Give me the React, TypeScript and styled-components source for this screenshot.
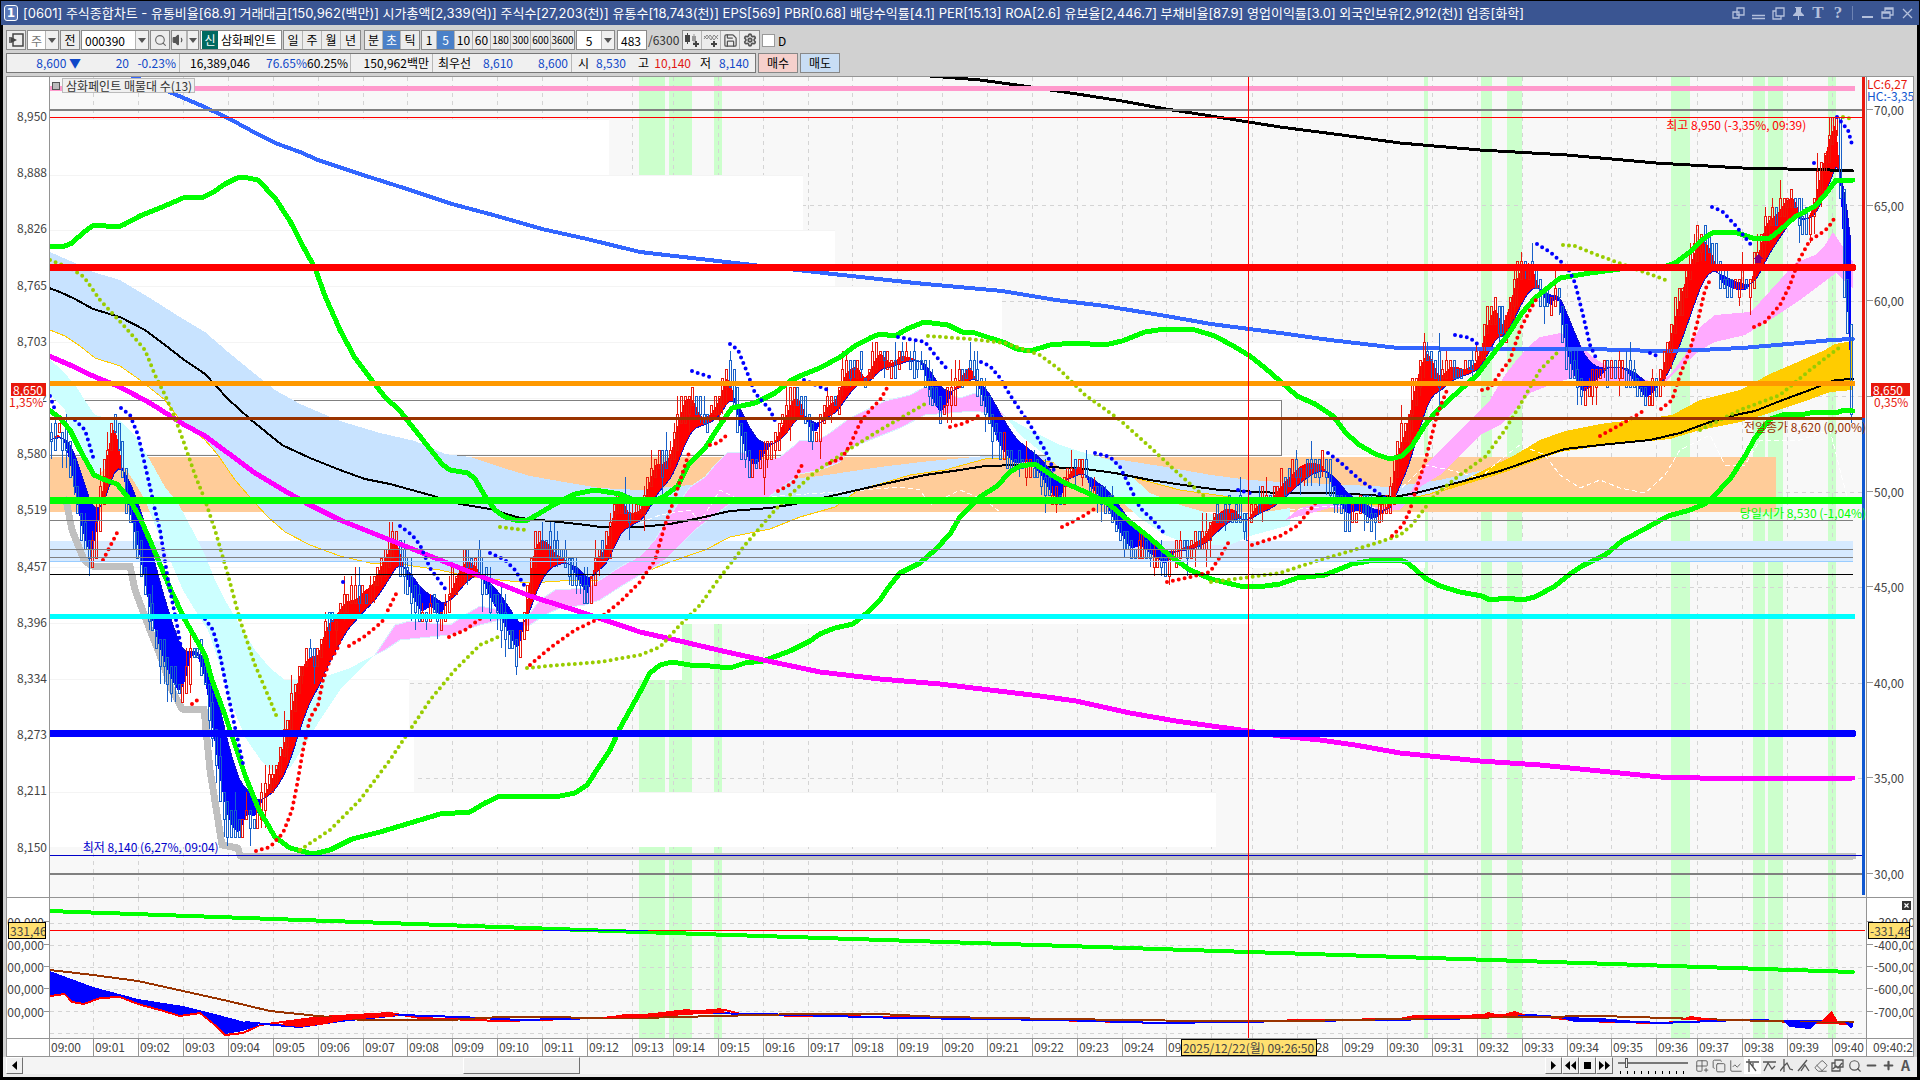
import React from "react";
import styled, { createGlobalStyle, css } from "styled-components";
import {
  Search, Volume1, Save, Settings, Minus, Plus, Copy, X, Grid2x2Plus, ChartLine, Eraser,
} from "lucide-react";

const FONT = '"Noto Sans CJK KR", sans-serif';

const Global = createGlobalStyle`
  * { box-sizing: border-box; }
  html, body, #root { height: 100%; }
  body { margin: 0; background: #000; font-family: ${FONT}; font-size: 12px; color: #000; overflow: hidden; }
  button, input, select { font: inherit; color: inherit; margin: 0; padding: 0; border-radius: 0; }
`;

/* ---------- shell ---------- */

const Shell = styled.div`
  height: 100vh;
  min-height: 600px;
  display: flex;
  flex-direction: column;
  border: solid #000;
  border-width: 1px 3px 3px;
  background: #d1d1d1;
`;
const TitleBar = styled.header`
  flex: none;
  height: 24px;
  margin: 0 -2px;
  padding: 0 2px 0 3px;
  display: flex;
  align-items: center;
  background: #3a5592;
  color: #fff;
`;
const TitleBadge = styled.span`
  width: 14px;
  height: 16px;
  margin-right: 5px;
  border: 1px solid #fff;
  border-radius: 3px;
  background: #5a78b8;
  font: bold 12px/14px "DejaVu Sans", sans-serif;
  text-align: center;
`;
const TitleText = styled.h1`
  flex: 1;
  margin: 0;
  font: 400 13px/24px Inter, "Noto Sans CJK KR", sans-serif;
  white-space: pre;
  overflow: hidden;
`;
const WindowButton = styled.button`
  width: 20px;
  height: 20px;
  display: grid;
  place-items: center;
  border: 0;
  background: none;
  color: #b4c0dc;
  font: bold 17px/18px "Liberation Serif", serif;
`;
const TitleDivider = styled.i`
  width: 1px;
  height: 14px;
  margin: 0 4px;
  background: #6d83b3;
`;

/* ---------- tool bars ---------- */

const ToolArea = styled.div`
  flex: none;
  padding: 5px 3px 3px;
  display: flex;
  flex-direction: column;
  gap: 3px;
`;
const ToolRow = styled.div`
  height: 20px;
  display: flex;
  white-space: nowrap;
`;
const Group = styled.div<{ $gap?: number }>`
  display: flex;
  flex: none;
  margin-right: ${(p) => p.$gap ?? 1}px;
  border: 1px solid #8a8a8a;
  background: #f0f0f0;
`;
const ToolButton = styled.button<{ $w?: number; $on?: boolean; $small?: boolean }>`
  width: ${(p) => p.$w ?? 19}px;
  height: 18px;
  display: grid;
  place-items: center;
  font-size: ${(p) => (p.$small ? 10 : 12)}px;
  line-height: 18px;
  border: 0;
  border-right: 1px solid #b4b4b4;
  background: ${(p) => (p.$on ? "#4a80c8" : "#ececec")};
  color: ${(p) => (p.$on ? "#fff" : "#000")};
  &:last-child { border-right: 0; }
`;
const Field = styled.input<{ $w: number }>`
  width: ${(p) => p.$w}px;
  height: 18px;
  padding: 0 3px;
  border: 0;
  background: #fff;
`;
const Picker = styled.select<{ $w: number; $dim?: boolean }>`
  width: ${(p) => p.$w}px;
  height: 18px;
  padding: 0 2px;
  border: 0;
  appearance: none;
  background: #fff;
  text-align: center;
  color: ${(p) => (p.$dim ? "#777" : "#000")};
`;
const Arrow = styled.i<{ $w?: number }>`
  width: ${(p) => p.$w ?? 13}px;
  display: grid;
  place-items: center;
  border-left: 1px solid #b4b4b4;
  &::after {
    content: "";
    border: solid transparent;
    border-width: 5px 4px 0;
    border-top-color: #555;
  }
`;
const StockName = styled.div`
  width: 82px;
  flex: none;
  display: flex;
  overflow: hidden;
  padding-left: 1px;
  margin-right: 1px;
  line-height: 18px;
  border: 1px solid #8a8a8a;
  background: #fff;
`;
const NewTag = styled.b`
  width: 16px;
  margin-right: 3px;
  font-weight: 400;
  text-align: center;
  background: #006a60;
  color: #fff;
`;
const Total = styled.span`
  width: 34px;
  line-height: 20px;
  color: #333;
`;
const CheckLabel = styled.label`
  display: flex;
  align-items: center;
  gap: 3px;
  input {
    appearance: none;
    width: 13px;
    height: 13px;
    border: 1px solid #999;
    background: #fff;
  }
`;

const QuoteBox = styled.div`
  width: 750px;
  display: flex;
  margin-right: 2px;
  border: 1px solid #777;
  background: #f0f0f0;
`;
const Quote = styled.span<{ $w: number; $c?: string; $line?: boolean }>`
  width: ${(p) => p.$w}px;
  height: 18px;
  line-height: 18px;
  text-align: right;
  color: ${(p) => p.$c ?? "#000"};
  ${(p) => p.$line && css`padding-right: 3px; border-right: 1px solid #b8b8b8;`}
`;
const TradeButton = styled.button<{ $bg: string }>`
  width: 40px;
  height: 20px;
  margin-right: 2px;
  line-height: 18px;
  border: 1px solid #888;
  background: ${(p) => p.$bg};
`;

/* ---------- chart frame ---------- */

const ChartFrame = styled.main`
  flex: 1;
  min-height: 0;
  margin: 0 3px;
  display: grid;
  grid-template-columns: 43px minmax(0, 1fr) 47px;
  grid-template-rows: minmax(0, 821fr) minmax(0, 141fr) 17px;
  border: 1px solid #949494;
  background: #fff;
  color: #444;
`;
const Cell = styled.div<{ $side?: "left" | "right"; $last?: boolean }>`
  position: relative;
  overflow: hidden;
  border: 0 solid #949494;
  border-bottom-width: ${(p) => (p.$last ? 0 : 1)}px;
  border-right-width: ${(p) => (p.$side === "left" ? 1 : 0)}px;
  border-left-width: ${(p) => (p.$side === "right" ? 1 : 0)}px;
`;
const Plot = styled.svg`
  display: block;
  width: 100%;
  height: 100%;
  background: #f8f8f8;
`;
const Scale = styled.div<{ $top: number; $bottom: number }>`
  height: 100%;
  padding-right: 2px;
  display: flex;
  flex-direction: column;
  &::before { content: ""; height: calc(${(p) => p.$top}% - 8px); }
  &::after { content: ""; height: calc(${(p) => p.$bottom}% - 8px); }
`;
const ScaleBody = styled.div`
  flex: 1;
  display: flex;
  flex-direction: column;
  justify-content: space-between;
`;
const Tick = styled.span<{ $right?: boolean; $mark?: boolean }>`
  display: flex;
  align-items: center;
  height: 16px;
  white-space: nowrap;
  justify-content: ${(p) => (p.$right ? "flex-start" : "flex-end")};
  ${(p) => p.$mark && p.$right && css`
    &::before { content: ""; flex: none; width: 6px; height: 1px; margin-right: 1px; background: #949494; }
  `}
  ${(p) => p.$mark && !p.$right && css`
    margin-right: -2px;
    &::after { content: ""; flex: none; width: 5px; height: 1px; background: #949494; }
  `}
`;
const Badge = styled.div<{ $top: number; $bg: string; $w: number; $line?: boolean }>`
  position: absolute;
  top: ${(p) => p.$top}%;
  right: 3px;
  width: ${(p) => p.$w}px;
  overflow: hidden;
  line-height: 13px;
  padding: 0 2px;
  white-space: nowrap;
  background: ${(p) => p.$bg};
  color: #fff;
  ${(p) => p.$line && css`
    line-height: 15px;
    padding: 0 1px;
    border: 1px solid #000;
    color: #444;
  `}
`;
const BadgeNote = styled.div<{ $top: number; $right?: boolean }>`
  position: absolute;
  top: ${(p) => p.$top}%;
  left: ${(p) => (p.$right ? 7 : 2)}px;
  line-height: 12px;
  background: #fff;
  color: #e8180c;
`;
const Limits = styled.div`
  position: absolute;
  top: 1px;
  left: 0;
  line-height: 12px;
  white-space: nowrap;
  background: #fff;
  color: #e8180c;
  span { display: block; color: #1058d0; }
`;
const Note = styled.span<{ $x: number; $y: number; $c: string; $end?: boolean }>`
  position: absolute;
  top: ${(p) => p.$y}%;
  ${(p) => (p.$end ? "right" : "left")}: ${(p) => p.$x}%;
  line-height: 14px;
  white-space: pre;
  color: ${(p) => p.$c};
`;
const Legend = styled.div`
  position: absolute;
  top: 1px;
  left: 2px;
  display: flex;
  align-items: center;
  gap: 2px;
  line-height: 13px;
  &::before { content: ""; width: 6px; height: 6px; border: 1px solid #555; background: #bbb; }
  span { padding: 0 2px 0 3px; border: 1px solid #bbb; background: #f0f0f0; color: #333; white-space: nowrap; }
`;
const CloseMark = styled.button`
  position: absolute;
  top: 3px;
  right: 2px;
  width: 9px;
  height: 9px;
  border: 0;
  display: grid;
  place-items: center;
  background: #333;
  color: #fff;
`;
const TimeAxis = styled.div<{ $cols: string }>`
  height: 100%;
  display: grid;
  grid-template-columns: ${(p) => p.$cols};
  line-height: 16px;
  span { border-left: 1px solid #949494; padding-left: 1px; white-space: nowrap; overflow: hidden; }
  span:first-child { border-left: 0; }
`;
const TimeBadge = styled.div`
  position: absolute;
  left: 66%;
  top: 0;
  transform: translateX(-50%);
  width: 136px;
  line-height: 15px;
  text-align: center;
  white-space: nowrap;
  border: 1px solid #000;
  background: #ffe070;
  color: #444;
`;
const LastTime = styled.div`
  padding-left: 6px;
  line-height: 16px;
  white-space: nowrap;
`;

/* ---------- bottom bar ---------- */

const BottomBar = styled.footer`
  flex: none;
  height: 20px;
  padding: 0 3px 3px;
  display: flex;
  background: #ececec;
`;
const ScrollTrack = styled.div`
  flex: 1;
  display: grid;
  grid-template-columns: 17px 440fr 117fr 964fr;
  background: #f4f4f4;
`;
const raised = css`
  border: 1px solid;
  border-color: #fff #707070 #707070 #fff;
  background: #f0f0f0;
`;
const RaisedButton = styled.button`
  width: 17px;
  height: 17px;
  display: grid;
  place-items: center;
  ${raised}
`;
const ScrollThumb = styled.div`
  grid-column: 3;
  ${raised}
`;
const Zoomer = styled.input`
  width: 70px;
  height: 17px;
  margin: 0 5px;
  appearance: none;
  background:
    repeating-linear-gradient(90deg, #000 0 1px, transparent 1px 7px) 2px 14px / 100% 3px no-repeat,
    linear-gradient(#777, #777) 0 5px / 100% 2px no-repeat;
  &::-webkit-slider-thumb { appearance: none; width: 3px; height: 10px; margin-top: -5px; background: #f0f0f0; border: 1px solid #555; }
`;
const MiniButton = styled.button<{ $on?: boolean }>`
  width: 17px;
  height: 17px;
  display: grid;
  place-items: center;
  border: 0;
  background: ${(p) => (p.$on ? "#fff" : "none")};
  color: #555;
  b { font-size: 14px; line-height: 17px; }
`;

/* ---------- series ---------- */

type Pt = [number, number];
const line = (s: string): Pt[] => s.split(" ").map((p) => p.split(",").map(Number) as Pt);

const TICKS = [49, 93, 138, 183, 228, 273, 318, 363, 407, 452, 497, 542, 587, 632, 673, 718, 763, 808, 852, 897, 942, 987, 1032, 1077, 1122, 1166, 1211, 1252, 1297, 1342, 1387, 1432, 1477, 1522, 1567, 1611, 1656, 1697, 1742, 1787, 1832];
const SIGNALS = [[639, 26], [669, 23], [714, 8], [1424, 4], [1481, 11], [1507, 15], [1671, 19], [1753, 12], [1768, 15], [1828, 8]];
const VOLUME_ROWS = [[120, 609], [176, 803], [231, 835], [287, 1002], [343, 1440], [399, 1281], [455, 1425], [511, 1425], [568, 1252], [624, 682], [680, 409], [735, 414], [793, 1216], [847, 50]];

const LONG_BLUE = "130,75 172,93 200,105 228,118 250,130 275,143 300,152 318,160 363,175 407,189 452,204 497,216 542,229 587,239 640,252 735,263 833,274 915,283 1002,291 1056,300 1105,306 1166,316 1211,324 1280,333 1330,340 1398,348 1480,349 1590,349 1656,351 1700,350 1742,348 1800,343 1832,340 1853,339";
const LONG_BLACK = "930,76 980,80 1024,86 1077,94 1122,101 1166,109 1211,116 1280,127 1342,135 1400,143 1480,150 1567,155 1656,163 1742,168 1787,169 1830,170 1853,171";
const BAND_UP = "49,247 65,246 72,243 84,232 94,225 118,227 125,224 140,216 160,208 183,198 204,197 215,191 225,184 237,178 243,177 258,180 275,198 290,221 305,250 315,268 325,296 340,330 355,358 370,378 385,397 400,411 415,430 430,449 442,464 450,470 468,473 475,479 485,496 495,510 505,517 515,520 528,520 540,513 555,504 575,494 595,490 620,494 640,503 650,503 663,497 678,486 688,465 705,448 720,425 732,408 755,403 775,393 790,381 800,376 820,368 840,357 855,346 872,337 880,334 895,336 907,329 924,322 948,325 962,332 975,333 990,338 1003,342 1017,349 1030,351 1050,345 1075,343 1105,345 1122,341 1145,332 1165,329 1195,330 1215,336 1235,347 1250,356 1265,368 1280,381 1297,396 1315,404 1333,416 1345,432 1358,444 1375,454 1390,459 1402,456 1412,446 1425,425 1435,413 1450,399 1477,375 1490,358 1507,336 1522,313 1535,298 1550,286 1560,278 1590,273 1620,269 1660,268 1675,263 1690,252 1702,240 1712,233 1735,232 1755,239 1770,238 1780,230 1795,217 1815,206 1825,195 1836,180 1853,180";
const BAND_LOW = "49,410 60,418 70,430 80,450 94,475 105,480 117,484 130,500 141,520 155,552 170,588 185,620 205,655 212,680 225,715 235,745 245,775 258,808 275,837 290,848 313,854 330,850 352,839 380,832 410,823 440,814 470,812 485,803 500,796 520,796 540,797 560,796 575,793 587,785 600,765 610,750 620,728 640,692 650,673 660,665 672,662 690,665 710,666 730,668 745,663 763,661 790,651 810,641 820,634 835,628 853,624 868,612 880,600 888,588 900,573 920,563 935,550 950,534 960,517 972,505 980,497 997,486 1010,472 1020,466 1035,464 1050,474 1065,483 1090,494 1110,505 1130,522 1150,538 1170,556 1190,570 1211,579 1240,586 1265,586 1280,584 1297,578 1325,575 1352,564 1375,560 1400,560 1408,563 1425,578 1440,586 1460,592 1482,596 1490,600 1507,598 1522,600 1535,597 1555,586 1570,574 1582,566 1605,555 1622,541 1650,526 1668,516 1690,510 1705,504 1713,497 1730,479 1745,456 1755,438 1770,419 1785,414 1800,415 1815,412 1835,413 1845,410 1853,411";
const MAGENTA = "49,356 70,365 93,376 120,387 150,403 183,424 205,436 228,453 255,473 285,491 306,503 340,520 390,540 430,556 480,576 530,596 587,614 640,632 680,641 718,650 763,660 820,672 880,679 940,684 990,690 1040,696 1076,701 1130,713 1176,721 1248,731 1280,736 1320,740 1355,745 1400,753 1450,758 1480,761 1540,765 1600,771 1660,777 1700,778 1780,778 1810,779 1853,778";
const MID_BLACK = "49,288 60,292 75,299 93,309 120,317 145,330 165,345 183,359 205,374 228,399 250,419 282,445 310,458 340,470 365,479 390,484 430,495 460,504 490,509 520,518 550,521 587,525 600,527 640,527 670,524 700,518 730,511 770,508 795,504 840,494 875,486 925,475 960,470 985,466 1020,465 1050,467 1085,469 1115,473 1150,480 1190,486 1220,490 1280,493 1330,493 1370,495 1395,497 1420,492 1460,482 1500,471 1540,457 1565,449 1600,445 1650,440 1680,433 1710,422 1740,414 1755,411 1780,401 1810,390 1835,380 1853,379";
const CLOUD_TOP = "50,252 75,263 93,272 120,280 150,298 183,319 205,332 228,352 255,374 275,390 300,404 340,421 380,433 415,441 445,454 470,457 500,467 530,476 570,483 600,488 640,490 690,485 730,482 780,480 820,476 880,467 930,461 985,456 1020,455 1060,457 1122,460 1166,467 1211,475 1250,480 1280,482 1330,484 1390,487 1440,480 1470,473 1484,470";
const CLOUD_LOW = "50,330 65,336 80,346 95,358 120,366 140,380 165,400 180,420 205,440 218,455 235,480 255,503 268,517 285,532 310,545 340,556 370,563 400,564 440,570 470,577 500,580 530,583 560,581 600,580 640,574 670,562 705,550 730,537 770,529 800,517 835,507 860,489 880,484 910,475 945,470 985,459 1010,458 1040,460 1060,464 1090,467 1120,474 1150,482 1180,490 1230,497 1300,502 1380,505 1430,494 1484,473";
const GOLD = "1440,492 1484,470 1515,455 1540,440 1565,431 1600,424 1650,418 1672,415 1700,400 1740,390 1770,374 1800,361 1825,350 1835,344 1853,341 1853,390 1830,392 1800,403 1770,413 1740,422 1700,430 1670,439 1600,446 1560,452 1500,474";
const CYAN_1 = "50,360 62,370 75,385 90,408 95,415 120,421 135,435 150,460 165,487 178,503 195,535 205,555 215,580 225,600 240,625 255,650 270,668 285,680 310,681 330,675 350,668 365,660 375,655 365,664 340,690 320,720 305,745 290,768 275,773 262,762 245,737 230,700 220,665 208,630 195,610 183,590 170,560 155,525 145,500 135,483 125,468 115,462 103,470 95,478 85,460 75,440 65,410 50,395";
const PINK_1 = "375,655 385,640 395,625 410,621 450,625 465,615 480,606 500,610 515,625 525,620 540,600 555,590 587,588 600,580 620,567 640,556 655,540 670,515 690,487 705,477 715,465 728,452 745,453 765,460 780,457 795,445 800,440 815,442 830,433 850,418 885,401 910,395 925,387 940,390 960,398 975,393 990,402 1005,416 975,411 950,413 925,415 900,428 870,440 850,448 840,462 820,470 800,474 785,485 765,500 750,498 735,500 715,515 695,530 680,545 665,560 650,570 640,575 620,587 600,600 585,605 560,608 545,615 530,625 520,626 500,620 480,625 450,635 420,638 400,640 385,650";
const CYAN_2 = "1005,416 1030,430 1060,445 1075,450 1110,460 1130,475 1150,493 1180,505 1215,515 1260,513 1290,508 1290,525 1250,536 1230,545 1190,545 1165,535 1140,518 1120,500 1100,485 1080,475 1060,468 1045,455 1020,435";
const PINK_2 = "1285,520 1300,508 1320,503 1350,502 1380,508 1405,500 1412,490 1425,465 1440,450 1455,435 1475,415 1490,400 1505,375 1515,362 1530,345 1540,337 1560,333 1575,340 1590,355 1605,365 1625,370 1640,378 1655,383 1670,375 1685,355 1700,327 1715,315 1750,312 1760,302 1780,280 1795,263 1815,255 1825,245 1833,232 1853,262 1853,288 1836,273 1820,285 1800,300 1770,320 1745,335 1715,342 1700,350 1680,368 1665,382 1650,385 1630,383 1600,382 1575,377 1555,383 1530,393 1515,410 1500,425 1480,435 1460,455 1440,475 1420,487 1400,510 1370,512 1330,508 1300,516";
const FLOOR = "66,500 72,530 84,560 92,566 130,566 135,590 150,630 160,655 172,690 182,709 204,709 210,770 222,845 238,848 240,856 1853,856";
const GHOSTS = [
  "640,523 660,515 690,510 700,522 720,490 740,500 790,495 840,492 900,487 920,490 930,505 960,490 985,500 1000,512",
  "1290,510 1330,506 1380,508 1410,480 1425,465 1450,470 1480,478 1500,460 1520,445 1545,455 1560,475 1580,488 1600,480 1620,488 1645,493 1665,475 1680,450 1710,435 1725,465 1745,465 1760,440 1800,440 1830,430 1840,470 1848,500",
];

const PRICE = line("50,440 58,433 65,445 72,480 80,530 88,555 93,550 100,500 105,460 110,425 115,425 120,460 127,510 135,540 143,580 150,620 160,655 170,680 178,695 185,680 190,650 197,655 205,685 212,735 220,790 228,825 238,835 246,812 255,818 265,790 275,770 285,735 292,700 300,665 310,655 318,655 325,625 335,615 345,600 355,600 363,590 372,585 380,565 388,550 395,535 403,570 410,595 420,615 430,605 440,618 450,590 460,565 468,560 478,570 487,595 498,615 508,635 518,655 525,610 533,540 545,540 555,555 565,560 577,580 587,598 595,555 605,550 612,510 620,495 628,515 640,510 647,485 655,460 662,465 670,455 677,420 685,395 693,400 700,420 710,415 720,395 727,370 733,395 740,440 748,465 757,465 765,450 775,440 783,420 793,395 800,400 808,430 815,435 825,405 835,400 845,370 855,365 865,380 878,350 890,365 900,355 912,358 922,365 930,400 940,415 950,395 960,375 970,365 980,395 990,425 1000,450 1015,465 1025,460 1040,475 1050,495 1060,500 1068,470 1080,465 1090,490 1103,500 1110,515 1120,535 1130,550 1140,545 1150,555 1165,565 1175,550 1190,545 1205,535 1213,515 1225,508 1235,510 1245,525 1255,505 1270,500 1280,485 1290,475 1300,465 1310,462 1322,465 1332,490 1345,515 1358,510 1370,520 1380,515 1390,500 1395,450 1405,430 1412,395 1420,360 1428,350 1438,380 1450,365 1465,370 1477,360 1487,320 1495,305 1502,330 1512,290 1520,265 1530,262 1538,290 1550,310 1557,290 1565,355 1572,375 1582,395 1595,380 1610,365 1625,370 1635,385 1645,400 1658,385 1668,340 1678,300 1690,260 1700,235 1710,250 1720,285 1735,290 1748,290 1758,250 1765,220 1775,215 1785,200 1793,195 1802,225 1812,210 1820,170 1830,130 1836,120 1839,160 1842,280 1846,290 1849,390 1853,430");

const RED_DOTS = ["103,560 117,533", "192,704 200,698", "256,851 270,847 283,833 292,810 297,785 303,750 310,718 318,705 323,680 330,660 337,650 341,637", "349,646 365,636 382,622 392,602 398,590", "449,637 465,630 480,619", "530,665 550,648 575,630 600,618 620,602 640,582 655,560 665,525 675,497 685,465 690,450", "710,445 718,443 727,435", "778,491 793,483 802,465", "830,463 842,458 850,445 860,423 870,410 880,400 887,388", "950,427 965,423 978,416", "1062,527 1080,518 1096,508", "1167,582 1190,577 1210,572 1220,557 1230,540", "1252,545 1280,536 1297,526 1310,510 1318,500", "1392,536 1403,525 1410,510 1415,493 1425,462 1437,415 1447,390", "1482,390 1490,388 1500,373 1510,360 1520,330 1530,310 1537,298", "1600,436 1620,425 1645,410", "1661,409 1672,400 1680,375 1690,350 1698,320 1705,290 1710,280", "1754,327 1765,322 1780,305 1790,285 1798,262 1810,240 1820,234 1828,228 1834,219"];
const BLUE_DOTS = ["50,396 55,410", "75,420 85,430 94,460", "121,408 130,415 138,435 145,465 150,487 155,510 160,530 168,580 178,630 183,660", "205,619 213,630 220,655 225,680 233,718 243,764", "343,582 347,580", "400,526 412,535 420,545 430,568 446,590", "490,553 505,560 515,570 524,585", "692,371 710,377", "730,344 738,350 745,367 755,393 770,410 777,425", "804,380 818,386 828,390", "898,337 925,342 935,355 948,370", "981,362 990,366 1000,378 1010,395 1030,425 1045,450 1055,473", "1095,453 1110,457 1120,467 1130,487 1140,508 1153,520 1164,533", "1238,490 1250,493", "1328,453 1340,462 1360,480 1385,498", "1455,335 1470,338 1480,346", "1537,244 1550,252 1568,268 1575,283 1583,315 1590,345 1597,360", "1650,353 1660,357", "1712,207 1722,211 1735,225 1752,246", "1814,163 1815,163", "1837,117 1848,130 1853,148"];
const OLIVE_DOTS = ["50,260 70,268 84,277 100,300 125,327 145,350 155,375 165,395 175,418 183,440 195,475 205,500 215,530 228,575 240,620 255,665 270,700 278,720", "300,850 330,830 360,800 390,760 410,730 430,700 455,670 480,645 498,637", "500,527 525,530", "527,668 560,665 600,662 640,655 660,647 680,625 700,605 718,580 745,545 775,510 790,495 815,472 845,452 880,430 925,404", "928,336 970,339 1005,343 1040,355 1060,370 1085,395 1120,420 1150,447 1180,475 1205,497", "1211,582 1250,577 1280,573 1310,563 1340,554 1380,542 1400,535 1412,525 1425,508 1435,495 1460,475 1485,457 1505,430 1520,405 1540,370 1560,350", "1563,245 1575,246 1600,256 1630,267 1655,276 1668,281", "1700,430 1740,410 1780,395 1810,370 1840,347", "1843,117 1853,119"];

const valueAt = (pts: Pt[], x: number) => {
  const i = Math.max(1, pts.findIndex((p) => p[0] >= x));
  const [a, b] = [pts[i - 1], pts[i]];
  return a[1] + ((b[1] - a[1]) * (x - a[0])) / (b[0] - a[0]);
};

const BAR = 3.75;
const TICK_SIZE = 9;
const bars = Array.from({ length: 481 }, (_, i) => 51 + i * BAR);
const closes = bars.map((x) => valueAt(PRICE, Math.min(x, 1853)));
const average = (alpha: number) => {
  let v = closes[0];
  return closes.map((c) => (v += (c - v) * alpha));
};
const fast = average(0.7);
const slow = average(0.16);

const ribbon = (up: boolean) =>
  bars.slice(1).map((x, k) => {
    const i = k + 1;
    const isUp = fast[i] + fast[i - 1] < slow[i] + slow[i - 1];
    if (isUp !== up) return "";
    return `M${bars[i - 1]} ${fast[i - 1]}L${x} ${fast[i]}L${x} ${slow[i]}L${bars[i - 1]} ${slow[i - 1]}Z`;
  }).join("");

let seed = 17;
const rand = () => (seed = (seed * 16807) % 2147483647) / 2147483647;
const snap = (v: number) => Math.round((v - 855) / TICK_SIZE) * TICK_SIZE + 855;
const clamp = (v: number) => Math.min(855, Math.max(117, v));
const candles = { up: "", down: "" };
bars.forEach((x, i) => {
  const prev = closes[Math.max(0, i - 1)];
  const shift = (rand() - 0.5) * 10;
  const top = snap(Math.min(prev, closes[i]) + shift - TICK_SIZE * rand() * 1.3);
  const bottom = Math.max(snap(Math.max(prev, closes[i]) + shift + TICK_SIZE * rand() * 1.3), top + TICK_SIZE);
  const high = rand() > 0.7 ? top - TICK_SIZE * Math.ceil(rand() * 2) : top;
  const low = rand() > 0.7 ? bottom + TICK_SIZE * Math.ceil(rand() * 2) : bottom;
  const cx = Math.round(x) + 0.5;
  const d = `M${cx} ${clamp(high)}V${clamp(top)}M${cx} ${clamp(bottom)}V${clamp(low)}M${cx - 1} ${clamp(top)}h2V${clamp(bottom)}h-2Z`;
  if (closes[i] - prev + (rand() - 0.5) * 14 < 0) candles.up += d;
  else candles.down += d;
});

const path = (values: number[]) => bars.map((x, i) => `${x},${values[i].toFixed(1)}`).join(" ");
const reversed = (s: string) => s.split(" ").reverse().join(" ");

const Curve = ({ d, c, w }: { d: string; c: string; w: number }) => (
  <polyline points={d} fill="none" stroke={c} strokeWidth={w} strokeLinejoin="round" strokeLinecap="round" />
);
const Level = ({ y, c, w = 1, to = 1853 }: { y: number; c: string; w?: number; to?: number }) => (
  <line x1={49} x2={to} y1={y} y2={y} stroke={c} strokeWidth={w} strokeLinecap={w > 3 && to === 1853 ? "round" : "butt"} />
);
const Dots = ({ runs, c }: { runs: string[]; c: string }) => (
  <g fill="none" stroke={c} strokeWidth={4} strokeLinecap="round" strokeDasharray="0 6" shapeRendering="auto">
    {runs.map((d) => <polyline key={d} points={d} />)}
  </g>
);

const PriceChart = () => (
  <Plot viewBox="50 77 1816 820" preserveAspectRatio="none" shapeRendering="crispEdges" role="img" aria-label="삼화페인트 5초 차트">
    {SIGNALS.map(([x, w]) => <rect key={x} x={x} y={77} width={w} height={820} fill="#ccffcc" />)}
    <g stroke="#d4d4d4" strokeDasharray="4 4">
      {TICKS.slice(1).map((x) => <line key={x} x1={x + 0.5} x2={x + 0.5} y1={77} y2={897} />)}
      {[205, 301, 396, 492, 587, 683, 778].map((y) => <line key={y} x1={50} x2={1862} y1={y + 0.5} y2={y + 0.5} />)}
    </g>
    {VOLUME_ROWS.map(([y, end], i) => (
      <rect key={y} x={50} y={y} width={end - 50} height={(VOLUME_ROWS[i + 1]?.[0] ?? y) - y} fill="#fff" />
    ))}
    {VOLUME_ROWS.map(([y, end]) => <line key={y} x1={50} x2={end} y1={y - 0.5} y2={y - 0.5} stroke="#f4f4f4" />)}
    <rect x={50} y={457} width={1726} height={55} fill="#ffcc99" />
    <path d="M50 400.5H1281.5V455.5H50" fill="none" stroke="#808080" />
    <polygon points={`${CLOUD_TOP} ${reversed(CLOUD_LOW)}`} fill="#c8e3ff" />
    <rect x={50} y={541} width={1803} height={20} fill="#d6eaff" />
    <Curve d={CLOUD_LOW} c="#ffcc00" w={1} />
    <polygon points={GOLD} fill="#ffcc00" />
    <polygon points={CYAN_1} fill="#ccffff" />
    <polygon points={CYAN_2} fill="#ccffff" />
    <polygon points={PINK_1} fill="#ffaaff" stroke="#d8f0ff" strokeWidth={1} />
    <polygon points={PINK_2} fill="#ffaaff" />
    {GHOSTS.map((d) => <polyline key={d} points={d} fill="none" stroke="#fff" strokeDasharray="5 3" />)}
    <Curve d={FLOOR} c="#c0c0c0" w={7} />
    <Curve d={MID_BLACK} c="#000" w={2} />
    <path d={ribbon(true)} fill="#f00" />
    <path d={ribbon(false)} fill="#00f" />
    <polyline points={path(slow)} fill="none" stroke="#1414c8" />
    <Curve d={LONG_BLUE} c="#3366ff" w={4} />
    <Curve d={LONG_BLACK} c="#000" w={3} />
    <path d={candles.up} fill="none" stroke="#e8180c" />
    <path d={candles.down} fill="none" stroke="#1860c8" />
    <Curve d={BAND_LOW} c="#0f0" w={5} />
    <Curve d={BAND_UP} c="#0f0" w={5} />
    <Curve d={MAGENTA} c="#f0f" w={5} />
    <Dots runs={OLIVE_DOTS} c="#99cc00" />
    <Dots runs={RED_DOTS} c="#f00" />
    <Dots runs={BLUE_DOTS} c="#00f" />
    <Level y={88.5} c="#ff99cc" w={5} />
    <Level y={110} c="#808080" w={2} to={1862} />
    <Level y={117.5} c="#f00" to={1862} />
    <Level y={267.5} c="#f00" w={7} />
    <Level y={383.5} c="#ff9900" w={5} />
    <Level y={418.5} c="#993300" w={3} to={1862} />
    <Level y={500.5} c="#0f0" w={7} to={1862} />
    <Level y={520.5} c="#808080" />
    <Level y={549.5} c="#808080" />
    <Level y={557.5} c="#808080" />
    <Level y={561.5} c="#99ccff" />
    <Level y={574.5} c="#000" />
    <Level y={616.5} c="#0ff" w={5} />
    <Level y={733.5} c="#00f" w={7} />
    <Level y={855.5} c="#0000c8" to={1862} />
    <Level y={874} c="#808080" w={2} to={1862} />
    <path d="M1758 254l5 5h-2v4h-6v-4h-2z" fill="#800080" />
    <rect x={1862} y={77} width={3} height={341} fill="#e8180c" />
    <rect x={1862} y={418} width={3} height={477} fill="#1058d0" />
    <line x1={1248.5} x2={1248.5} y1={77} y2={897} stroke="#f00" />
  </Plot>
);

const FlowChart = () => (
  <Plot viewBox="50 898 1816 140" preserveAspectRatio="none" shapeRendering="crispEdges" role="img" aria-label="보조지표">
    {SIGNALS.map(([x, w]) => <rect key={x} x={x} y={898} width={w} height={140} fill="#ccffcc" />)}
    <g stroke="#d4d4d4" strokeDasharray="4 4">
      {TICKS.slice(1).map((x) => <line key={x} x1={x + 0.5} x2={x + 0.5} y1={898} y2={1038} />)}
      {[923, 945, 967, 989, 1011, 1033].map((y) => <line key={y} x1={50} x2={1862} y1={y + 0.5} y2={y + 0.5} />)}
    </g>
    <Curve d="49,911 640,932 1280,953 1853,972" c="#0f0" w={4} />
    <polyline points="50,996 65,994 72,1002 84,1004 100,998 120,997 138,1004 160,1010 180,1016 200,1013 215,1025 225,1035 243,1033 260,1025 290,1021 320,1017 390,1013 420,1018 500,1021 540,1020 620,1017 687,1011 725,1010 745,1015 900,1017 1050,1020 1160,1023 1250,1021 1400,1019 1415,1016 1530,1015 1580,1021 1655,1023 1740,1020 1853,1024" fill="none" stroke="#f00" strokeWidth={2} />
    <polyline points="245,1022 275,1025 300,1027 340,1021 400,1015 460,1017 520,1020 600,1018 700,1013 760,1014 900,1018 1060,1020 1160,1023 1300,1021 1450,1019 1530,1015 1600,1020 1660,1023 1740,1020 1853,1022" fill="none" stroke="#00f" strokeWidth={2} />
    <Curve d="50,970 93,975 138,981 183,991 228,1001 270,1011 318,1016 363,1020 450,1020 500,1017 640,1018 718,1016 800,1014 880,1014 940,1017 1060,1019 1200,1021 1300,1021 1450,1018 1530,1017 1600,1016 1700,1019 1800,1022 1853,1022" c="#993300" w={2} />
    <g fill="#00f">
      <polygon points="50,971 93,987 138,999 183,1006 215,1014 245,1022 260,1025 243,1031 225,1034 215,1024 200,1012 180,1015 160,1009 138,1003 120,996 100,997 84,1003 72,1001 65,993 50,995" />
      <polygon points="1560,1018 1600,1018 1655,1023 1575,1022" />
      <polygon points="1783,1021 1817,1022 1810,1029 1790,1027" />
      <polygon points="1845,1022 1853,1023 1853,1027 1850,1028" />
    </g>
    <g fill="#f00">
      <polygon points="280,1025 290,1020 318,1018 345,1015 390,1013 400,1016 345,1020 320,1025 300,1027" />
      <polygon points="600,1018 625,1014 645,1014 687,1009 700,1011 720,1008 726,1013 700,1014 640,1018" />
      <polygon points="1405,1018 1415,1015 1480,1016 1488,1012 1500,1015 1515,1011 1526,1015 1480,1018" />
      <polygon points="1680,1020 1690,1016 1720,1020" />
      <polygon points="1820,1022 1832,1011 1838,1022" />
    </g>
    <line x1={50} x2={1865} y1={930.5} y2={930.5} stroke="#f00" />
    <line x1={543} x2={648} y1={930.5} y2={930.5} stroke="#00f" />
    <line x1={1248.5} x2={1248.5} y1={898} y2={1038} stroke="#f00" />
  </Plot>
);

/* ---------- labels ---------- */

const PRICES = ["8,950", "8,888", "8,826", "8,765", "8,703", "8,642", "8,580", "8,519", "8,457", "8,396", "8,334", "8,273", "8,211", "8,150"];
const PERCENTS = ["70,00", "65,00", "60,00", "", "50,00", "45,00", "40,00", "35,00", "30,00"];
const TIMES = TICKS.map((_, i) => `09:${String(i).padStart(2, "0")}`);
const COLS = TICKS.map((x, i) => `minmax(0, ${(TICKS[i + 1] ?? 1866) - (i ? x : 50)}fr)`).join(" ");
const INTERVALS: [string, number][] = [["1", 15], ["5", 18], ["10", 18], ["60", 18], ["180", 20], ["300", 20], ["600", 20], ["3600", 23]];

const Labels = ({ items, top, bottom, right, mark }: { items: string[]; top: number; bottom: number; right?: boolean; mark?: boolean }) => (
  <Scale $top={top} $bottom={bottom}>
    <ScaleBody>
      {items.map((t, i) => <Tick key={i} $right={right} $mark={mark}>{t}</Tick>)}
    </ScaleBody>
  </Scale>
);

const Glyph = ({ d, fill }: { d: string; fill?: boolean }) => (
  <svg width={13} height={13} viewBox="0 0 13 13" fill={fill ? "currentColor" : "none"} stroke={fill ? "none" : "currentColor"} strokeWidth={1.3}>
    <path d={d} />
  </svg>
);

const PanelIcon = () => (
  <svg width={15} height={14} viewBox="0 0 15 14" fill="none" stroke="#444" strokeWidth={1.5}>
    <path d="M4 1h10v12H4zM1 4v6" />
    <path d="M2 4l6 3-6 3z" fill="#444" stroke="none" />
  </svg>
);
const CandleIcon = () => (
  <svg width={16} height={15} viewBox="0 0 16 15">
    <path d="M1 2h5v7H1zM3 0h1v11H3z" fill="#444" />
    <path d="M8 3h4v5H8zM9.500 1h1v9h-1z" fill="#999" />
    <path d="M11 8h2v2h2v2h-2v2h-2v-2H9v-2h2z" fill="#444" />
  </svg>
);
const SignalIcon = () => (
  <svg width={16} height={15} viewBox="0 0 16 15">
    <path d="M1 6l3-4 4 5 3-5 4 4M1 3l3 3 3-4 4 5 4-5" fill="none" stroke="#888" />
    <path d="M10 8h2v2h2v2h-2v2h-2v-2H8v-2h2z" fill="#444" />
  </svg>
);

const B = "#1048c8";
const TITLE = "[0601] 주식종합차트 - 유통비율[68.9] 거래대금[150,962(백만)] 시가총액[2,339(억)] 주식수[27,203(천)] 유통수[18,743(천)] EPS[569] PBR[0.68] 배당수익률[4.1] PER[15.13] ROA[2.6] 유보율[2,446.7] 부채비율[87.9] 영업이익률[3.0] 외국인보유[2,912(천)] 업종[화학]";

export default function App() {
  return (
    <>
      <Global />
      <Shell>
        <TitleBar>
          <TitleBadge>1</TitleBadge>
          <TitleText>{TITLE}</TitleText>
          <WindowButton aria-label="창 분리"><Glyph d="M5 1h7v7H5zM1 5h6v6H1z" /></WindowButton>
          <WindowButton aria-label="내리기"><Glyph d="M0 8.500h13M0 11.500h13" /></WindowButton>
          <WindowButton aria-label="복사"><Glyph d="M4 1h8v8H4zM4 4H1v8h8V9" /></WindowButton>
          <WindowButton aria-label="고정"><Glyph fill d="M3 0h7v1H9v4l3 3v1H7v4H6V9H1V8l3-3V1H3z" /></WindowButton>
          <WindowButton>T</WindowButton>
          <WindowButton>?</WindowButton>
          <TitleDivider />
          <WindowButton aria-label="최소화"><Glyph fill d="M1 9h11v2H1z" /></WindowButton>
          <WindowButton aria-label="복원"><Glyph d="M4 4V1h8v7H9M1 5h8v6H1zM1 6h8M4 2h8" /></WindowButton>
          <WindowButton aria-label="닫기"><Glyph d="M2 2l9 9M11 2l-9 9" /></WindowButton>
        </TitleBar>

        <ToolArea>
          <ToolRow>
            <Group><ToolButton $w={18} aria-label="패널"><PanelIcon /></ToolButton></Group>
            <Group><Picker $w={17} $dim aria-label="구분"><option>주</option></Picker><Arrow /></Group>
            <Group><ToolButton $w={18}>전</ToolButton></Group>
            <Group><Field $w={53} defaultValue="000390" aria-label="종목코드" /><Arrow /></Group>
            <Group><ToolButton $w={18} aria-label="검색"><Search size={13} color="#666" /></ToolButton></Group>
            <Group><ToolButton $w={15} aria-label="소리"><Volume1 size={14} fill="#555" color="#555" /></ToolButton><Arrow $w={11} /></Group>
            <StockName><NewTag>신</NewTag>삼화페인트</StockName>
            <Group $gap={3}>{["일", "주", "월", "년"].map((t) => <ToolButton key={t}>{t}</ToolButton>)}</Group>
            <Group>{["분", "초", "틱"].map((t) => <ToolButton key={t} $w={18} $on={t === "초"}>{t}</ToolButton>)}</Group>
            <Group>{INTERVALS.map(([t, w]) => <ToolButton key={t} $w={w} $on={t === "5"} $small={t.length > 2}>{t}</ToolButton>)}</Group>
            <Group $gap={2}><Picker $w={24} aria-label="주기"><option>5</option></Picker><Arrow /></Group>
            <Group><Field $w={28} defaultValue="483" aria-label="조회 개수" /></Group>
            <Total>/6300</Total>
            <Group $gap={2}>
              <ToolButton aria-label="차트 유형"><CandleIcon /></ToolButton>
              <ToolButton aria-label="지표 추가"><SignalIcon /></ToolButton>
              <ToolButton aria-label="저장"><Save size={15} color="#555" /></ToolButton>
              <ToolButton aria-label="설정"><Settings size={14} color="#555" strokeWidth={3} /></ToolButton>
            </Group>
            <CheckLabel><input type="checkbox" />D</CheckLabel>
          </ToolRow>
          <ToolRow>
            <QuoteBox>
              <Quote $w={74} $c={B}>8,600 ▼</Quote>
              <Quote $w={48} $c={B}>20</Quote>
              <Quote $w={51} $c={B} $line>-0.23%</Quote>
              <Quote $w={70}>16,389,046</Quote>
              <Quote $w={57} $c={B}>76.65%</Quote>
              <Quote $w={44} $line>60.25%</Quote>
              <Quote $w={82} $line>150,962백만</Quote>
              <Quote $w={38}>최우선</Quote>
              <Quote $w={42} $c={B}>8,610</Quote>
              <Quote $w={59} $c={B} $line>8,600</Quote>
              <Quote $w={17}>시</Quote>
              <Quote $w={37} $c={B}>8,530</Quote>
              <Quote $w={23}>고</Quote>
              <Quote $w={42} $c="#e01810">10,140</Quote>
              <Quote $w={20}>저</Quote>
              <Quote $w={38} $c={B}>8,140</Quote>
            </QuoteBox>
            <TradeButton $bg="#f6d0cc">매수</TradeButton>
            <TradeButton $bg="#c8ddf4">매도</TradeButton>
          </ToolRow>
        </ToolArea>

        <ChartFrame>
          <Cell $side="left">
            <Labels items={PRICES} top={4.7} bottom={6.2} />
            <Badge $top={37.3} $bg="#e8180c" $w={35}>8,650</Badge>
            <BadgeNote $top={38.9}>1,35%</BadgeNote>
          </Cell>
          <Cell>
            <PriceChart />
            <Legend><span>삼화페인트 매물대 수(13)</span></Legend>
            <Note $x={89} $y={5} $c="#f00">최고 8,950 (-3,35%, 09:39)</Note>
            <Note $x={0} $y={41.8} $c="#993300" $end>전일종가 8,620 (0,00%)</Note>
            <Note $x={0} $y={52.3} $c="#0f0" $end>당일시가 8,530 (-1,04%)</Note>
            <Note $x={1.8} $y={93.1} $c="#00c">최저 8,140 (6,27%, 09:04)</Note>
          </Cell>
          <Cell $side="right">
            <Labels items={PERCENTS} top={4} bottom={2.9} right mark />
            <Limits>LC:6,27<span>HC:-3,35</span></Limits>
            <Badge $top={37.3} $bg="#e8180c" $w={39}>8,650</Badge>
            <BadgeNote $top={38.9} $right>0,35%</BadgeNote>
          </Cell>

          <Cell $side="left">
            <Labels items={["00,000", "00,000", "00,000", "00,000", "00,000"]} top={17} bottom={19} mark />
            <Badge $top={17.2} $bg="#ffe070" $w={38} $line>331,46</Badge>
          </Cell>
          <Cell><FlowChart /></Cell>
          <Cell $side="right">
            <Labels items={["-300,00", "-400,00", "-500,00", "-600,00", "-700,00"]} top={17} bottom={19} right mark />
            <CloseMark aria-label="지표 닫기"><X size={7} strokeWidth={4} /></CloseMark>
            <Badge $top={17.2} $bg="#ffe070" $w={42} $line>-331,46</Badge>
          </Cell>

          <Cell $side="left" $last />
          <Cell $last>
            <TimeAxis $cols={COLS}>{TIMES.map((t) => <span key={t}>{t}</span>)}</TimeAxis>
            <TimeBadge>2025/12/22(월) 09:26:50</TimeBadge>
          </Cell>
          <Cell $side="right" $last><LastTime>09:40:2</LastTime></Cell>
        </ChartFrame>

        <BottomBar>
          <ScrollTrack>
            <RaisedButton aria-label="왼쪽으로"><Glyph fill d="M9 2v9L4 6.500z" /></RaisedButton>
            <ScrollThumb />
          </ScrollTrack>
          <RaisedButton aria-label="재생"><Glyph fill d="M4 2v9l5-4.500z" /></RaisedButton>
          <RaisedButton aria-label="뒤로"><Glyph fill d="M6 2v9L1 6.500zM12 2v9L7 6.500z" /></RaisedButton>
          <RaisedButton aria-label="정지"><Glyph fill d="M3 3h7v7H3z" /></RaisedButton>
          <RaisedButton aria-label="앞으로"><Glyph fill d="M1 2v9l5-4.500zM7 2v9l5-4.500z" /></RaisedButton>
          <Zoomer type="range" defaultValue={10} aria-label="배율" />
          <MiniButton aria-label="창 추가"><Grid2x2Plus size={14} strokeWidth={1.5} /></MiniButton>
          <MiniButton aria-label="창 복사"><Copy size={14} strokeWidth={1.5} /></MiniButton>
          <MiniButton aria-label="영역"><ChartLine size={14} strokeWidth={1.5} /></MiniButton>
          <MiniButton $on aria-label="십자선"><Glyph d="M3 0v13M0 3h13M4 4l6 8M7 4v4" /></MiniButton>
          <MiniButton aria-label="수평선"><Glyph d="M0 3h13M1 12l4-8 4 6 3-3" /></MiniButton>
          <MiniButton aria-label="수직선"><Glyph d="M4 0v13M0 12l4-5 3-3 3 6 3 1" /></MiniButton>
          <MiniButton aria-label="추세선"><Glyph d="M1 12L10 1M4 12l4-6 4 6" /></MiniButton>
          <MiniButton aria-label="지우기"><Eraser size={14} strokeWidth={1.5} /></MiniButton>
          <MiniButton aria-label="차트 복사"><Glyph d="M4 1h8v7h-8zM4 4h-3v8h8v-4M2 10l3-3 2 2 4-5" /></MiniButton>
          <MiniButton aria-label="확대"><Search size={14} strokeWidth={2} /></MiniButton>
          <MiniButton aria-label="축소"><Minus size={13} strokeWidth={4} /></MiniButton>
          <MiniButton aria-label="더하기"><Plus size={13} strokeWidth={4} /></MiniButton>
          <MiniButton><b>A</b></MiniButton>
        </BottomBar>
      </Shell>
    </>
  );
}
